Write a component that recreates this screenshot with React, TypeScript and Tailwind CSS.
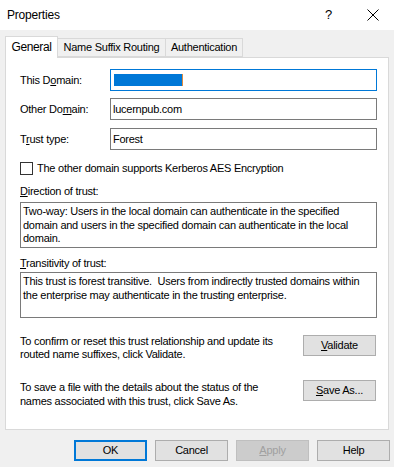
import React from "react";

const font = { fontFamily: '"Liberation Sans", Arial, sans-serif' };

function Field({ label, children, focused }: { label: React.ReactNode; children?: React.ReactNode; focused?: boolean }) {
  return (
    <div className="flex items-center h-[22px]">
      <div className="w-[90px] text-black">{label}</div>
      <div
        className={`w-[267px] h-[22px] border flex items-center px-[2px] text-black bg-white ${
          focused ? "border-[#0078d7]" : "border-[#7a7a7a]"
        }`}
      >
        {children}
      </div>
    </div>
  );
}

function Btn({ children, primary, disabled, className = "" }: { children: React.ReactNode; primary?: boolean; disabled?: boolean; className?: string }) {
  const tone = disabled
    ? "bg-[#cccccc] border-[#bfbfbf] text-[#a0a0a0]"
    : primary
    ? "bg-[#e1e1e1] border-2 border-[#0078d7] text-black"
    : "bg-[#e1e1e1] border-[#adadad] text-black";
  return (
    <div className={`w-[73px] h-[21px] shrink-0 border flex items-center justify-center ${tone} ${className}`}>
      {children}
    </div>
  );
}

export default function App() {
  return (
    <div
      className="w-[394px] h-[467px] bg-[#f0f0f0] relative overflow-hidden text-[11px] tracking-[-0.25px]"
      style={font}
    >
      {/* Title bar */}
      <div className="h-[30px] bg-white flex items-center pl-[7px] pr-[14px]">
        <span className="text-[12px] tracking-[-0.2px] text-black">Properties</span>
        <span className="ml-auto text-[13px] text-black mr-[35px]">?</span>
        <svg width="12" height="12" viewBox="0 0 12 12" className="mr-[1px]">
          <path d="M0.5 0.5 L11.5 11.5 M11.5 0.5 L0.5 11.5" stroke="#000" strokeWidth="1" />
        </svg>
      </div>

      {/* Tabs */}
      <div className="flex items-end h-[27px] pl-[5px] relative z-10">
        <div className="w-[53px] h-[22px] bg-white border border-b-0 border-[#d9d9d9] flex items-center justify-center text-[12px] tracking-[-0.4px] text-black -mb-px pb-[2px]">
          General
        </div>
        <div className="w-[108px] h-[19px] bg-[#f0f0f0] border border-l-0 border-[#d9d9d9] flex items-center justify-center text-black">
          Name Suffix Routing
        </div>
        <div className="w-[77px] h-[19px] bg-[#f0f0f0] border border-l-0 border-[#d9d9d9] flex items-center justify-center text-black">
          Authentication
        </div>
      </div>

      {/* Panel */}
      <div className="ml-[5px] w-[384px] h-[373px] bg-white border border-[#d9d9d9] pl-[14px] pt-[11px] text-black">
        <Field label={<>This D<u>o</u>main:</>} focused>
          <div className="w-[69px] h-[12px] bg-[#0078d7] border-r border-[#e08a3c] ml-[1px]" />
        </Field>
        <div className="mt-[7px]">
          <Field label={<>Other Do<u>m</u>ain:</>}>lucernpub.com</Field>
        </div>
        <div className="mt-[8px]">
          <Field label={<>T<u>r</u>ust type:</>}>Forest</Field>
        </div>

        <div className="flex items-center mt-[12px] h-[13px]">
          <div className="w-[13px] h-[13px] border border-[#333333] bg-white" />
          <span className="ml-[4px]">The other domain supports Kerberos AES Encryption</span>
        </div>

        <div className="mt-[9px] leading-[14px]">
          <u>D</u>irection of trust:
        </div>
        <div className="mt-[4px] w-[357px] h-[46px] border border-[#7a7a7a] px-[2px] pt-[2px] leading-[13.5px]">
          Two-way: Users in the local domain can authenticate in the specified domain and users in the specified domain can authenticate in the local domain.
        </div>

        <div className="mt-[8px] leading-[14px]">
          <u>T</u>ransitivity of trust:
        </div>
        <div className="mt-[2px] w-[357px] h-[46px] border border-[#7a7a7a] px-[2px] pt-[2px] leading-[13.5px]">
          This trust is forest transitive.&nbsp; Users from indirectly trusted domains within the enterprise may authenticate in the trusting enterprise.
        </div>

        <div className="flex items-start mt-[17px]">
          <div className="w-[256px] mr-[27px] leading-[13px]">
            To confirm or reset this trust relationship and update its routed name suffixes, click Validate.
          </div>
          <Btn>
            <span><u>V</u>alidate</span>
          </Btn>
        </div>

        <div className="flex items-start mt-[19px]">
          <div className="w-[256px] mr-[27px] leading-[14px]">
            To save a file with the details about the status of the names associated with this trust, click Save As.
          </div>
          <Btn>
            <span><u>S</u>ave As...</span>
          </Btn>
        </div>
      </div>

      {/* Bottom buttons */}
      <div className="flex mt-[10px] pl-[74px] gap-[8px]">
        <Btn primary>OK</Btn>
        <Btn>Cancel</Btn>
        <Btn disabled>
          <span><u>A</u>pply</span>
        </Btn>
        <Btn>Help</Btn>
      </div>
    </div>
  );
}
